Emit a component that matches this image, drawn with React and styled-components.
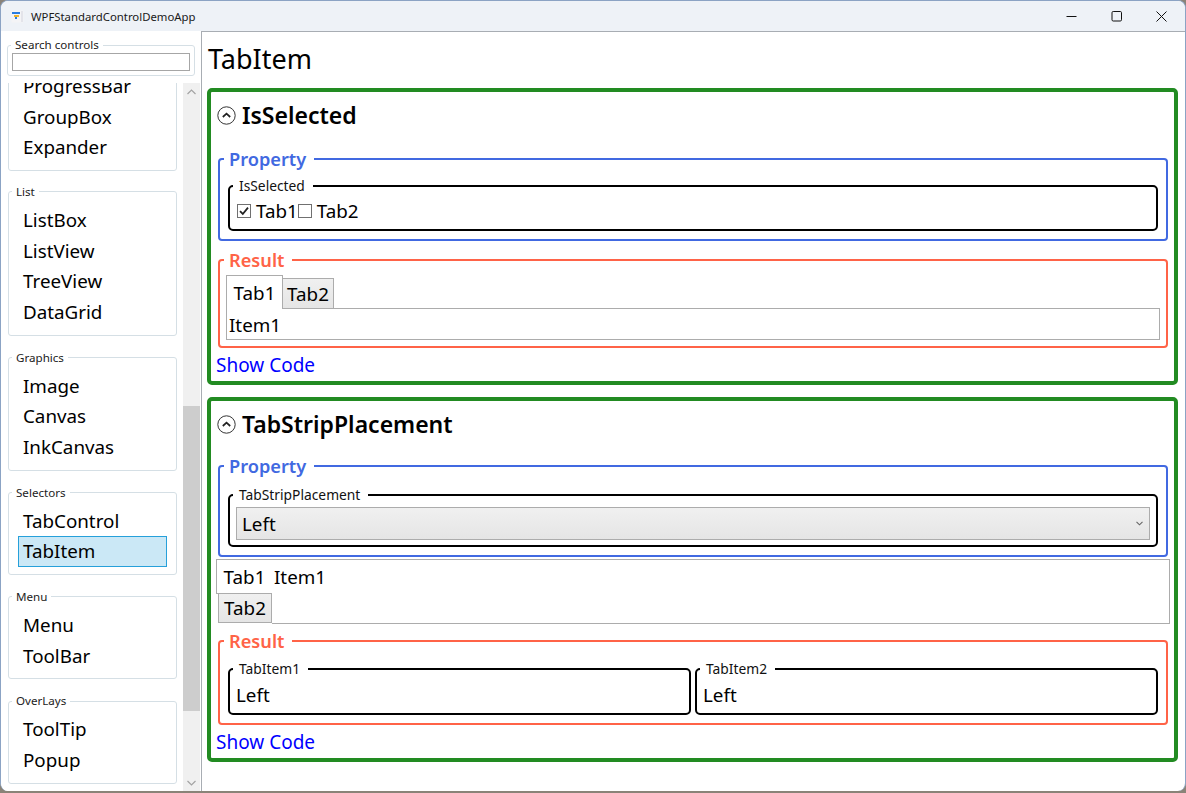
import styled, { createGlobalStyle } from "styled-components";

const FONT = `"Noto Sans", "Open Sans", "Liberation Sans", sans-serif`;

const GlobalStyle = createGlobalStyle`
  html, body {
    margin: 0;
    padding: 0;
    background: #8a8378;
  }
  * {
    box-sizing: border-box;
  }
`;

const NAV_GROUPS = [
  { title: "Status", items: ["ProgressBar", "GroupBox", "Expander"] },
  { title: "List", items: ["ListBox", "ListView", "TreeView", "DataGrid"] },
  { title: "Graphics", items: ["Image", "Canvas", "InkCanvas"] },
  { title: "Selectors", items: ["TabControl", "TabItem"] },
  { title: "Menu", items: ["Menu", "ToolBar"] },
  { title: "OverLays", items: ["ToolTip", "Popup"] },
];

const Window = styled.div`
  width: 1186px;
  height: 791px;
  display: flex;
  flex-direction: column;
  background: #fff;
  border: 1px solid #8ba3c4;
  border-bottom: none;
  border-radius: 8px;
  overflow: hidden;
  font-family: ${FONT};
  color: #000;
`;

const TitleBar = styled.header`
  height: 30px;
  flex: none;
  display: flex;
  align-items: center;
  padding-left: 10px;
  background: #eef2f7;
`;

const AppName = styled.span`
  margin-left: 7px;
  font-size: 11.35px;
  color: #1a1a1a;
`;

const WindowButtons = styled.div`
  margin-left: auto;
  margin-right: 1px;
  display: flex;
  align-items: center;
`;

const WindowButton = styled.div`
  width: 45px;
  height: 30px;
  display: flex;
  align-items: center;
  justify-content: center;
`;

const Body = styled.div`
  flex: 1;
  min-height: 0;
  display: flex;
`;

const Sidebar = styled.aside`
  width: 200px;
  flex: none;
  display: flex;
  flex-direction: column;
  padding-top: 6px;
  background: #fff;
`;

const SearchBox = styled.fieldset`
  margin: 0 6px;
  padding: 0 4px 4px;
  height: 39px;
  border: 1px solid #d5dfe5;
  border-radius: 3px;
`;

const SmallLegend = styled.legend`
  margin-left: ${(props) => props.$offset}px;
  padding: 0 4px;
  font-size: 11.6px;
  line-height: 16px;
  color: #222;
`;

const SearchInput = styled.div`
  height: 18px;
  border: 1px solid #a6a6a6;
  background: #fff;
`;

const ListRow = styled.div`
  flex: 1;
  min-height: 0;
  margin-top: 7px;
  display: flex;
`;

const NavViewport = styled.div`
  width: 182px;
  flex: none;
  overflow: hidden;
  padding: 0 6px 0 7px;
`;

const NavContent = styled.div`
  margin-top: -33px;
`;

const NavGroup = styled.fieldset`
  margin: 0 0 14px;
  padding: 5px 9px 7px;
  border: 1px solid #d5dfe5;
  border-radius: 3px;
  min-width: 0;

  &:first-child {
    margin-bottom: 13px;
  }
`;

const NavItem = styled.div`
  height: 30.67px;
  line-height: 28.67px;
  padding-left: 4px;
  font-size: 18.8px;
  border: 1px solid ${(props) => (props.$selected ? "#26a0da" : "transparent")};
  background: ${(props) => (props.$selected ? "#cbe8f6" : "transparent")};
`;

const ScrollBar = styled.div`
  width: 17px;
  flex: none;
  display: flex;
  flex-direction: column;
  background: #f0f0f0;
`;

const ScrollArrow = styled.div`
  height: 17px;
  flex: none;
  display: flex;
  align-items: center;
  justify-content: center;
`;

const ScrollTrack = styled.div`
  flex: 1;
  min-height: 0;
`;

const ScrollThumb = styled.div`
  height: 305px;
  margin-top: 306px;
  background: #cdcdcd;
`;

const Main = styled.main`
  flex: 1;
  min-width: 0;
  padding: 0 7px 0 5px;
  border-left: 1px solid #a8adb3;
  border-top: 1px solid #a8adb3;
`;

const PageTitle = styled.h1`
  margin: 7px 0 9px 1px;
  font-size: 27px;
  font-weight: 400;
  line-height: 40px;
`;

const Card = styled.section`
  border: 4px solid #228b22;
  border-radius: 5px;
  padding: 7px 4px 2px 5px;
  margin-bottom: 12px;
`;

const CardHeader = styled.div`
  display: flex;
  align-items: center;
  height: 32px;
  gap: 6px;
  padding-left: 1px;
  margin-bottom: ${(props) => props.$gap}px;
`;

const CardHeading = styled.h2`
  margin: 0;
  font-size: 23px;
  font-weight: 600;
  line-height: 32px;
`;

const Group = styled.fieldset`
  margin: 0 2px ${(props) => props.$after || 0}px;
  padding: ${(props) => props.$top}px 8px ${(props) => props.$bottom}px 8px;
  border: 2px solid ${(props) => props.$color};
  border-radius: 4px;
  min-width: 0;
`;

const GroupLegend = styled.legend`
  margin-left: -4px;
  padding: 0 8px 0 5px;
  font-size: 18.2px;
  font-weight: 600;
  line-height: 24px;
  color: ${(props) => props.$color};
`;

const Inner = styled.fieldset`
  margin: 0;
  flex: ${(props) => (props.$grow ? 1 : "none")};
  padding: 2px 6px 4px;
  border: 2px solid #000;
  border-radius: 5px;
  min-width: 0;
`;

const InnerLegend = styled.legend`
  margin-left: -3px;
  padding: 0 8px 0 6px;
  font-size: 13.8px;
  line-height: 18px;
  color: #111;
`;

const InnerRow = styled.div`
  display: flex;
  gap: 4px;
`;

const CheckRow = styled.div`
  display: flex;
  align-items: center;
  height: 28px;
  padding-left: 1px;
  font-size: 18.8px;
`;

const CheckBox = styled.span`
  width: 14px;
  height: 14px;
  flex: none;
  display: flex;
  align-items: center;
  justify-content: center;
  margin-right: 5px;
  border: 1px solid #707070;
  background: #fff;
`;

const TabStrip = styled.div`
  display: flex;
  align-items: flex-end;
  height: 34px;
  margin: 3px -2px 0;
`;

const TopTab = styled.div`
  height: ${(props) => (props.$active ? 34 : 31)}px;
  width: ${(props) => props.$width}px;
  display: flex;
  align-items: center;
  justify-content: center;
  font-size: 18.8px;
  border: 1px solid #acacac;
  border-left-width: ${(props) => (props.$active ? 1 : 0)}px;
  border-bottom-width: ${(props) => (props.$active ? 0 : 1)}px;
  background: ${(props) =>
    props.$active ? "#fff" : "linear-gradient(#f0f0f0, #e5e5e5)"};
`;

const TabPanel = styled.div`
  height: 32px;
  margin: -1px -2px 0;
  padding-left: 2px;
  border: 1px solid #acacac;
  font-size: 18.8px;
  line-height: 32px;
`;

const ShowCode = styled.a`
  display: block;
  font-size: 19px;
  line-height: 28px;
  margin-top: 3px;
  color: #0000ff;
`;

const ComboBox = styled.div`
  height: 33px;
  display: flex;
  align-items: center;
  justify-content: space-between;
  padding: 0 6px 0 5px;
  margin: 1px 0;
  border: 1px solid #acacac;
  background: linear-gradient(#f0f0f0, #e5e5e5);
  font-size: 18.8px;
`;

const SideTabs = styled.div`
  display: flex;
  height: 65px;
  margin: 2px 0 5px;
`;

const SideStrip = styled.div`
  width: 56px;
  flex: none;
  display: flex;
  flex-direction: column;
`;

const ActiveSideTab = styled.div`
  width: 56px;
  height: 35px;
  display: flex;
  align-items: center;
  justify-content: center;
  font-size: 18.8px;
  border: 1px solid #acacac;
  border-right: none;
`;

const IdleSideTab = styled.div`
  width: 54px;
  height: 30px;
  margin: -1px 0 0 2px;
  display: flex;
  align-items: center;
  justify-content: center;
  font-size: 18.8px;
  border: 1px solid #acacac;
  background: linear-gradient(#f0f0f0, #e5e5e5);
`;

const SidePanel = styled.div`
  flex: 1;
  padding-left: 2px;
  border: 1px solid #acacac;
  border-left: none;
  font-size: 18.8px;
  line-height: 34px;
`;

const ValueText = styled.div`
  font-size: 18.8px;
  line-height: 27px;
  margin: 2px 0 0;
`;

function AppIcon() {
  return (
    <svg width="13" height="13" viewBox="0 0 13 13">
      <rect x="0.5" y="0.5" width="12" height="12" fill="#f4f4f6" />
      <rect x="1" y="2" width="8" height="2" fill="#2b7de0" />
      <rect x="3" y="5" width="5" height="2" fill="#f0b429" />
      <rect x="4" y="7" width="2" height="2" fill="#2b7de0" />
      <rect x="10" y="1" width="2" height="11" fill="#e3e4ea" />
    </svg>
  );
}

function MinimizeIcon() {
  return (
    <svg width="11" height="11" viewBox="0 0 11 11">
      <path d="M0.5 5.5H10.5" stroke="#111" fill="none" />
    </svg>
  );
}

function MaximizeIcon() {
  return (
    <svg width="11" height="11" viewBox="0 0 11 11">
      <rect x="1" y="0.5" width="9.5" height="9.5" rx="1.2" stroke="#111" fill="none" />
    </svg>
  );
}

function CloseIcon() {
  return (
    <svg width="11" height="11" viewBox="0 0 11 11">
      <path d="M0.5 0.5L10.5 10.5M10.5 0.5L0.5 10.5" stroke="#111" fill="none" />
    </svg>
  );
}

function ExpanderIcon() {
  return (
    <svg width="19" height="19" viewBox="0 0 19 19" style={{ flex: "none" }}>
      <circle cx="9.5" cy="9.5" r="8.7" stroke="#333" strokeWidth="1" fill="#fff" />
      <path d="M5.8 11L9.5 7.6L13.2 11" stroke="#222" strokeWidth="1.7" fill="none" />
    </svg>
  );
}

function Chevron({ up }) {
  return (
    <svg width="9" height="6" viewBox="0 0 9 6">
      <path
        d={up ? "M0.5 5L4.5 1L8.5 5" : "M0.5 1L4.5 5L8.5 1"}
        stroke="#a3a3a3"
        strokeWidth="1.2"
        fill="none"
      />
    </svg>
  );
}

function CheckMark() {
  return (
    <svg width="12" height="12" viewBox="0 0 12 12">
      <path d="M2 6.2L4.8 9L10 2.6" stroke="#222" strokeWidth="1.8" fill="none" />
    </svg>
  );
}

function ComboChevron() {
  return (
    <svg width="7" height="5" viewBox="0 0 7 5">
      <path d="M0.5 0.8L3.5 3.8L6.5 0.8" stroke="#666" strokeWidth="1.1" fill="none" />
    </svg>
  );
}

export default function App() {
  return (
    <>
      <GlobalStyle />
      <Window>
        <TitleBar>
          <AppIcon />
          <AppName>WPFStandardControlDemoApp</AppName>
          <WindowButtons>
            <WindowButton>
              <MinimizeIcon />
            </WindowButton>
            <WindowButton>
              <MaximizeIcon />
            </WindowButton>
            <WindowButton>
              <CloseIcon />
            </WindowButton>
          </WindowButtons>
        </TitleBar>
        <Body>
          <Sidebar>
            <SearchBox>
              <SmallLegend $offset={-1}>Search controls</SmallLegend>
              <SearchInput />
            </SearchBox>
            <ListRow>
              <NavViewport>
                <NavContent>
                  {NAV_GROUPS.map((group) => (
                    <NavGroup key={group.title}>
                      <SmallLegend $offset={-6}>{group.title}</SmallLegend>
                      {group.items.map((item) => (
                        <NavItem key={item} $selected={item === "TabItem"}>
                          {item}
                        </NavItem>
                      ))}
                    </NavGroup>
                  ))}
                </NavContent>
              </NavViewport>
              <ScrollBar>
                <ScrollArrow>
                  <Chevron up />
                </ScrollArrow>
                <ScrollTrack>
                  <ScrollThumb />
                </ScrollTrack>
                <ScrollArrow>
                  <Chevron />
                </ScrollArrow>
              </ScrollBar>
            </ListRow>
          </Sidebar>
          <Main>
            <PageTitle>TabItem</PageTitle>
            <Card>
              <CardHeader $gap={16}>
                <ExpanderIcon />
                <CardHeading>IsSelected</CardHeading>
              </CardHeader>
              <Group $color="#4169e1" $top={6} $bottom={8} $after={7}>
                <GroupLegend $color="#4169e1">Property</GroupLegend>
                <Inner>
                  <InnerLegend>IsSelected</InnerLegend>
                  <CheckRow>
                    <CheckBox>
                      <CheckMark />
                    </CheckBox>
                    <span>Tab1</span>
                    <CheckBox />
                    <span>Tab2</span>
                  </CheckRow>
                </Inner>
              </Group>
              <Group $color="#ff6347" $top={0} $bottom={6}>
                <GroupLegend $color="#ff6347">Result</GroupLegend>
                <TabStrip>
                  <TopTab $active $width={57}>
                    Tab1
                  </TopTab>
                  <TopTab $width={51}>Tab2</TopTab>
                </TabStrip>
                <TabPanel>Item1</TabPanel>
              </Group>
              <ShowCode>Show Code</ShowCode>
            </Card>
            <Card>
              <CardHeader $gap={14}>
                <ExpanderIcon />
                <CardHeading>TabStripPlacement</CardHeading>
              </CardHeader>
              <Group $color="#4169e1" $top={8} $bottom={8}>
                <GroupLegend $color="#4169e1">Property</GroupLegend>
                <Inner>
                  <InnerLegend>TabStripPlacement</InnerLegend>
                  <ComboBox>
                    Left
                    <ComboChevron />
                  </ComboBox>
                </Inner>
              </Group>
              <SideTabs>
                <SideStrip>
                  <ActiveSideTab>Tab1</ActiveSideTab>
                  <IdleSideTab>Tab2</IdleSideTab>
                </SideStrip>
                <SidePanel>Item1</SidePanel>
              </SideTabs>
              <Group $color="#ff6347" $top={7} $bottom={8}>
                <GroupLegend $color="#ff6347">Result</GroupLegend>
                <InnerRow>
                  <Inner $grow>
                    <InnerLegend>TabItem1</InnerLegend>
                    <ValueText>Left</ValueText>
                  </Inner>
                  <Inner $grow>
                    <InnerLegend>TabItem2</InnerLegend>
                    <ValueText>Left</ValueText>
                  </Inner>
                </InnerRow>
              </Group>
              <ShowCode>Show Code</ShowCode>
            </Card>
          </Main>
        </Body>
      </Window>
    </>
  );
}
